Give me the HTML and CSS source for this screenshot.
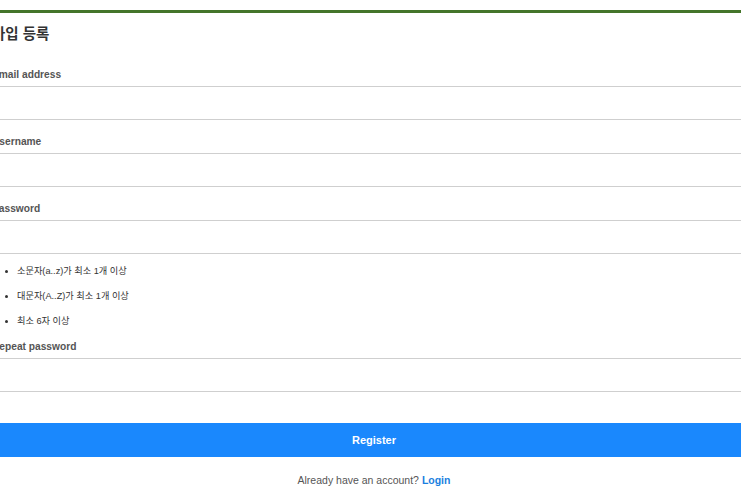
FILE: index.html
```html
<!DOCTYPE html>
<html lang="ko">
<head>
<meta charset="utf-8">
<title>가입 등록</title>
<link rel="stylesheet" href="styles.css">
</head>
<body>
<div class="card">
  <h1 class="title">가입 등록</h1>
  <form class="form">
    <div class="field">
      <label class="label">Email address</label>
      <input class="input" type="email">
    </div>
    <div class="field">
      <label class="label">Username</label>
      <input class="input" type="text">
    </div>
    <div class="field">
      <label class="label">Password</label>
      <input class="input" type="password">
    </div>
    <ul class="rules">
      <li>소문자(a..z)가 최소 1개 이상</li>
      <li>대문자(A..Z)가 최소 1개 이상</li>
      <li>최소 6자 이상</li>
    </ul>
    <div class="field field-tight">
      <label class="label">Repeat password</label>
      <input class="input" type="password">
    </div>
    <button class="button" type="button">Register</button>
    <p class="footer">Already have an account? <a class="link" href="#">Login</a></p>
  </form>
</div>
</body>
</html>
```
FILE: styles.css
```css
html, body {
  margin: 0;
  padding: 0;
  background: #fff;
  overflow: hidden;
}
body {
  font-family: "Liberation Sans", "Noto Sans CJK KR", sans-serif;
  color: #333;
}
.card {
  margin: 10px 0 0 -8px;
  width: 764px;
  border-top: 3px solid #44752a;
  padding-top: 11px;
}
.title {
  margin: 0;
  font-size: 14.5px;
  line-height: 20px;
  font-weight: bold;
  color: #333;
}
.form {
  margin-top: 24px;
  display: flex;
  flex-direction: column;
}
.field {
  display: flex;
  flex-direction: column;
  gap: 4px;
  margin-bottom: 15px;
}
.field-tight {
  margin-bottom: 0;
}
.label {
  font-size: 10.2px;
  line-height: 14px;
  font-weight: bold;
  color: #555;
}
.input {
  box-sizing: border-box;
  height: 34px;
  width: 100%;
  margin: 0;
  border: 1px solid #cfcfcf;
  background: #fff;
  padding: 0 8px;
}
.rules {
  margin: -10px 0 6px;
  padding-left: 25px;
  font-size: 9.2px;
  line-height: 25px;
  color: #333;
}
.button {
  margin-top: 31px;
  height: 34px;
  width: 100%;
  border: 0;
  background: #1a88fd;
  color: #fff;
  font-family: inherit;
  font-size: 11px;
  font-weight: bold;
}
.footer {
  margin: 16px 0 0;
  text-align: center;
  font-size: 10.5px;
  line-height: 14px;
  color: #555;
}
.link {
  color: #1a7fe0;
  font-weight: bold;
  text-decoration: none;
}
```
